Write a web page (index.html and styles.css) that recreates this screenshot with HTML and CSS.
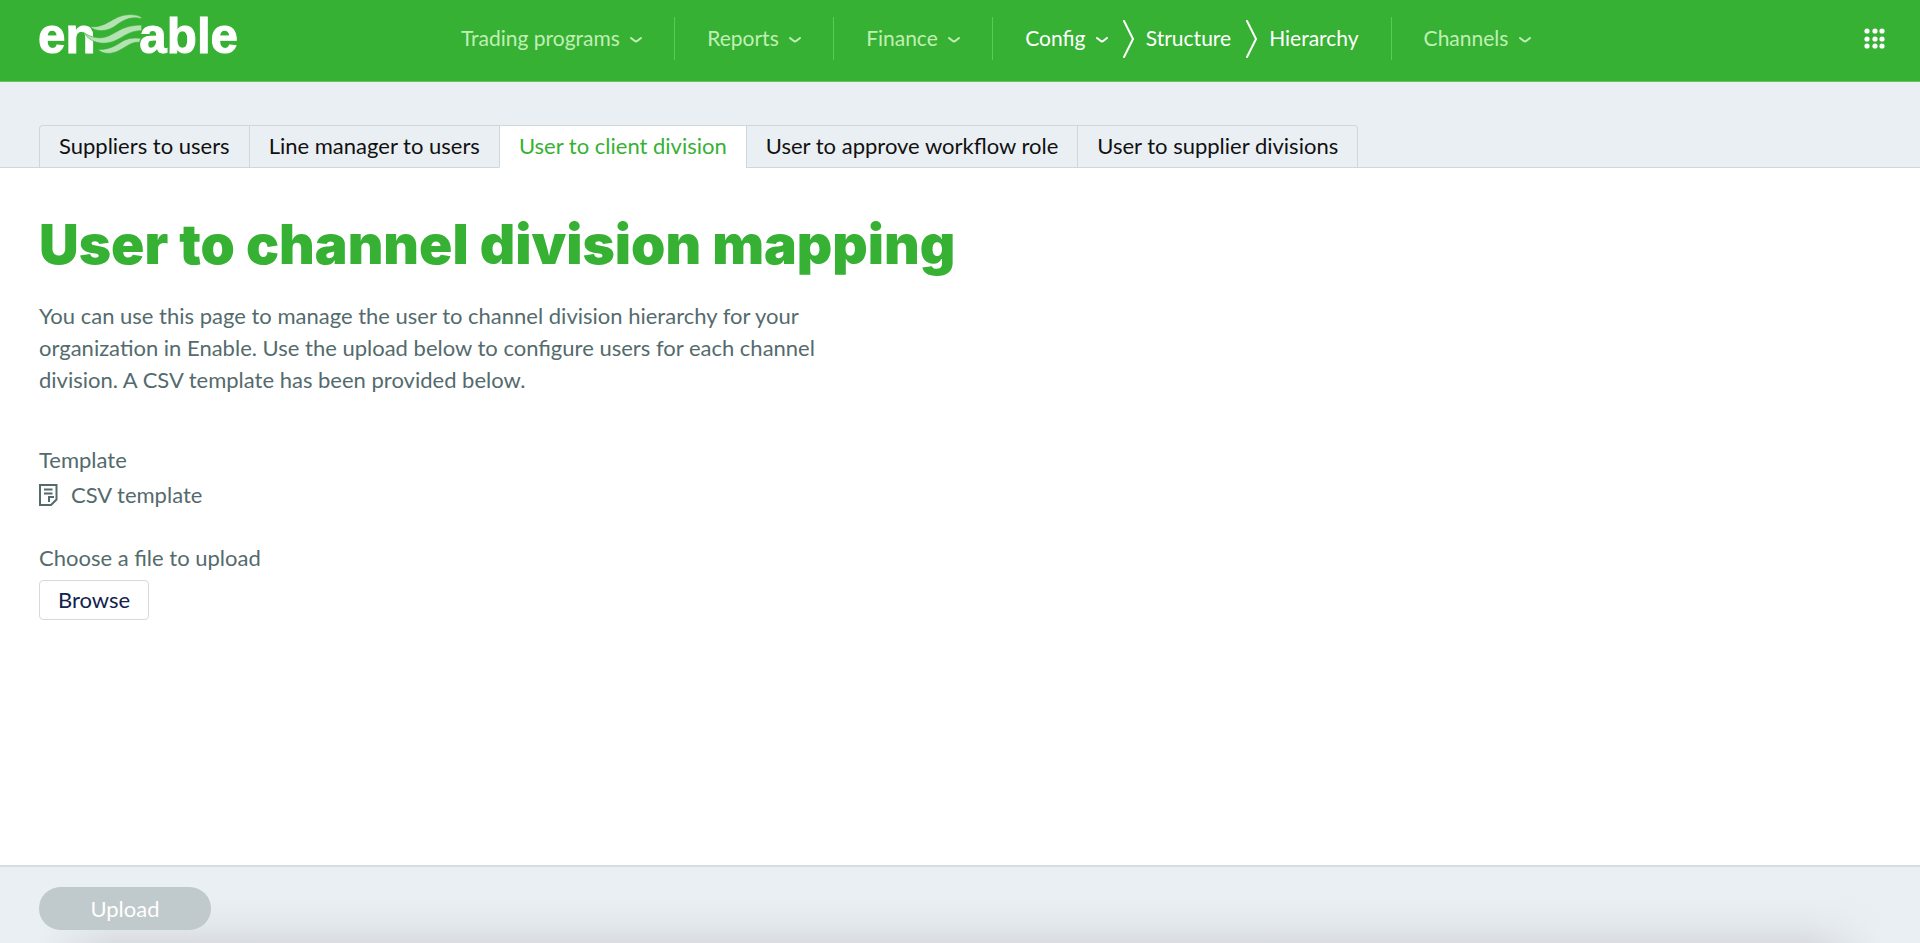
FILE: index.html
```
<!DOCTYPE html>
<html lang="en">
<head>
    <meta charset="UTF-8">
    <meta name="viewport" content="width=device-width, initial-scale=1.0">
    <title>User to channel division mapping</title>
    <link rel="stylesheet" href="styles.css">
</head>
<body>
    <header class="header">
        <a href="#" class="logo" aria-label="Enable home">
            <svg width="207" height="60" viewBox="48 12 621 180">
                <text x="54" y="160" class="logo-text">en</text>
                <text x="358" y="160" class="logo-text">able</text>
                <g class="logo-waves">
                    <path d="M210 80C260 85 280 45 325 44C345 43 358 47 365 53L363 56C335 48 310 60 290 75C265 95 230 98 210 80Z"/>
                    <path d="M190 97C215 114 240 118 265 108C300 92 310 76 365 75V92C330 92 315 108 290 120C255 137 215 133 190 97Z"/>
                    <path d="M233 148C265 151 290 135 310 122C330 112 350 113 363 115L358 127C335 125 320 140 300 150C280 162 250 166 233 148Z"/>
                </g>
            </svg>
        </a>
        <nav class="nav">
            <div class="nav-item">
                <a href="#">Trading programs <svg class="chevron" viewBox="0 0 12 6"><path d="M1 1L4.500 3.800Q6 5 7.500 3.800L11 1"/></svg></a>
            </div>
            <div class="nav-item">
                <a href="#">Reports <svg class="chevron" viewBox="0 0 12 6"><path d="M1 1L4.500 3.800Q6 5 7.500 3.800L11 1"/></svg></a>
            </div>
            <div class="nav-item">
                <a href="#">Finance <svg class="chevron" viewBox="0 0 12 6"><path d="M1 1L4.500 3.800Q6 5 7.500 3.800L11 1"/></svg></a>
            </div>
            <div class="nav-item active">
                <a href="#">Config <svg class="chevron" viewBox="0 0 12 6"><path d="M1 1L4.500 3.800Q6 5 7.500 3.800L11 1"/></svg></a>
                <svg class="crumb" viewBox="0 0 12 38"><path d="M2 1L11 19L2 37"/></svg>
                <a href="#">Structure</a>
                <svg class="crumb" viewBox="0 0 12 38"><path d="M2 1L11 19L2 37"/></svg>
                <a href="#">Hierarchy</a>
            </div>
            <div class="nav-item">
                <a href="#">Channels <svg class="chevron" viewBox="0 0 12 6"><path d="M1 1L4.500 3.800Q6 5 7.500 3.800L11 1"/></svg></a>
            </div>
        </nav>
        <button class="apps" aria-label="Apps">
            <svg width="22" height="22" viewBox="0 0 22 22">
                <circle cx="3" cy="3" r="2.600"/><circle cx="11" cy="3" r="2.600"/><circle cx="18" cy="3" r="2.600"/>
                <circle cx="3" cy="11" r="2.600"/><circle cx="11" cy="11" r="2.600"/><circle cx="18" cy="11" r="2.600"/>
                <circle cx="3" cy="18" r="2.600"/><circle cx="11" cy="18" r="2.600"/><circle cx="18" cy="18" r="2.600"/>
            </svg>
        </button>
    </header>

    <div class="tab-bar">
        <nav class="tabs">
            <a href="#">Suppliers to users</a>
            <a href="#">Line manager to users</a>
            <a href="#" class="selected">User to client division</a>
            <a href="#">User to approve workflow role</a>
            <a href="#">User to supplier divisions</a>
        </nav>
    </div>

    <main class="content">
        <h1>User to channel division mapping</h1>
        <p class="intro">You can use this page to manage the user to channel division hierarchy for your organization in Enable. Use the upload below to configure users for each channel division. A CSV template has been provided below.</p>

        <div class="field">
            <div class="label">Template</div>
            <a href="#" class="template">
                <svg width="19" height="22" viewBox="0 0 19 22">
                    <path d="M1 1H17.500V15.500L12 21H1Z"/>
                    <path d="M5 5.500H13.500M5 9.500H13.500M10 18V13H15"/>
                </svg>
                CSV template
            </a>
        </div>

        <div class="field">
            <label class="label" for="browse">Choose a file to upload</label>
            <button id="browse" class="browse">Browse</button>
        </div>
    </main>

    <footer class="footer">
        <button class="upload" disabled>Upload</button>
    </footer>
</body>
</html>
```
FILE: styles.css
```
* {
    box-sizing: border-box;
}

body {
    margin: 0;
    min-height: 100vh;
    display: flex;
    flex-direction: column;
    font-family: Lato, sans-serif;
    font-size: 22px;
    line-height: 32px;
    color: #546b6d;
    background-color: #fff;
}

a {
    color: inherit;
    text-decoration: none;
}

button {
    font: inherit;
    cursor: pointer;
}

.header {
    display: flex;
    align-items: flex-start;
    height: 82px;
    padding: 0 34px 0 36px;
    background-color: #36b133;
    border-bottom: 1px solid #5fc65c;
}

.logo {
    margin-top: 4px;
    line-height: 0;
}

.logo-text {
    font-family: "Liberation Sans", sans-serif;
    font-size: 148px;
    font-weight: bold;
    fill: #fff;
    stroke: #fff;
    stroke-width: 3;
}

.logo-waves {
    fill: #b5e2b2;
    stroke: #36b133;
    stroke-width: 2;
}

.nav {
    display: flex;
    margin: 17px auto 0 186px;
    font-size: 21px;
    color: #c0efb6;
}

.nav-item {
    display: flex;
    align-items: center;
    height: 43px;
    padding: 0 32px;
    white-space: nowrap;
}

.nav-item a {
    padding-bottom: 2px;
}

.nav-item + .nav-item {
    border-left: 1px solid #50d250;
}

.nav-item.active {
    color: #fff;
}

.chevron {
    width: 12px;
    height: 6px;
    margin-left: 5px;
    vertical-align: middle;
}

.chevron path,
.crumb path {
    fill: none;
    stroke: currentColor;
    stroke-width: 2;
    stroke-linecap: round;
}

.crumb {
    width: 12px;
    height: 38px;
    margin: 0 12px 0 14px;
}

.apps {
    margin-top: 28px;
    padding: 0;
    border: none;
    background: none;
    line-height: 0;
    fill: #fff;
}

.tab-bar {
    padding: 43px 39px 0;
    background-color: #eaeff3;
    border-bottom: 1px solid #cfd7da;
}

.tabs {
    display: flex;
    width: fit-content;
    margin-bottom: -1px;
    border: 1px solid #cfd7da;
    border-bottom: none;
    border-radius: 4px 4px 0 0;
    color: #111;
}

.tabs a {
    height: 42px;
    padding: 4px 19px;
    border-bottom: 1px solid #cfd7da;
    white-space: nowrap;
}

.tabs a + a {
    border-left: 1px solid #cfd7da;
}

.tabs .selected {
    color: #36b133;
    background-color: #fff;
    border-bottom-color: #fff;
}

.content {
    flex: 1;
    padding: 40px 39px;
}

h1 {
    margin: 0 0 20px;
    font-family: Inter, sans-serif;
    font-size: 55px;
    font-weight: 900;
    line-height: 72px;
    color: #36b133;
}

.intro {
    max-width: 800px;
    margin: 0 0 48px;
}

.field {
    margin-bottom: 34px;
}

.label {
    display: block;
    margin-bottom: 6px;
}

.template {
    display: flex;
    align-items: center;
    gap: 13px;
    line-height: 26px;
}

.template path {
    fill: none;
    stroke: #546b6d;
    stroke-width: 2;
}

.browse {
    display: block;
    height: 40px;
    padding: 0 18px;
    line-height: 36px;
    color: #12234d;
    background-color: #fff;
    border: 1px solid #d3dbdd;
    border-radius: 4px;
}

.footer {
    height: 78px;
    padding: 20px 39px 0;
    background:
        linear-gradient(to right, #eaeff3 2%, transparent 6%, transparent 94%, #eaeff3 98%),
        linear-gradient(#eaeff3 40%, #e3e8ec 75%, #d9dde1);
    border-top: 2px solid #d6dde0;
}

.upload {
    width: 172px;
    height: 43px;
    padding: 0;
    color: #fff;
    background-color: #c0c9cb;
    border: none;
    border-radius: 22px;
}
```
